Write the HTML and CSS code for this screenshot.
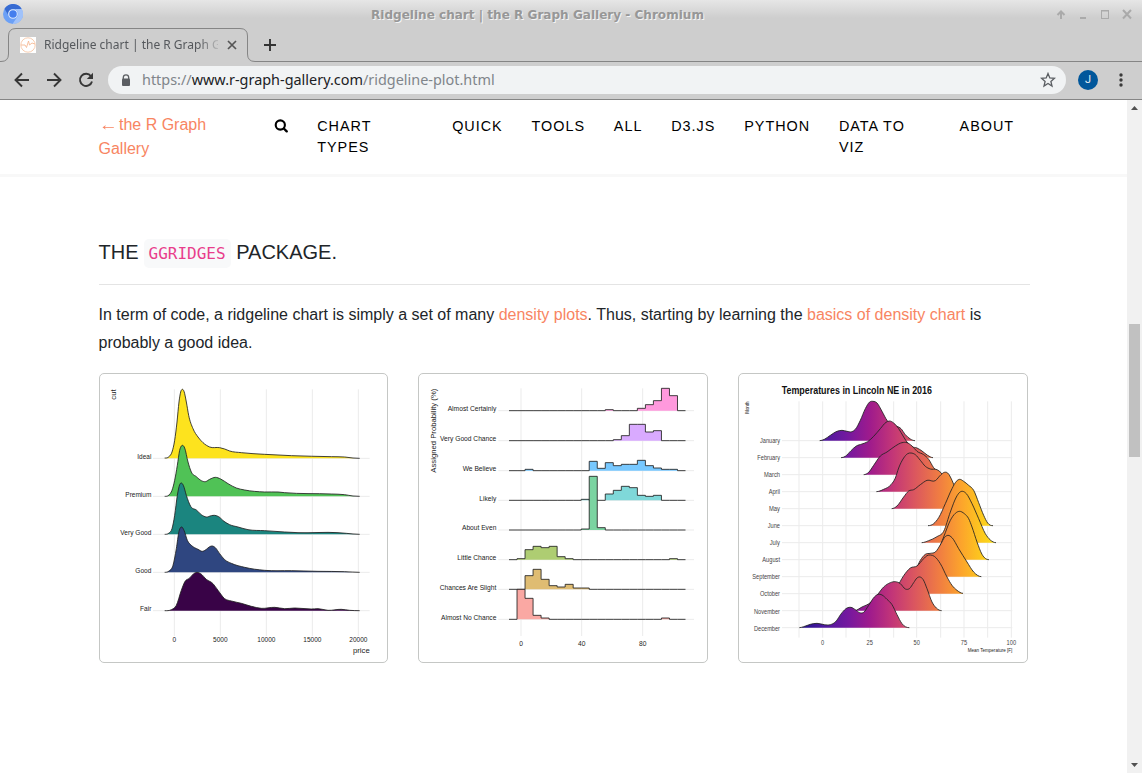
FILE: index.html
```html
<!DOCTYPE html>
<html lang="en">
<head>
<meta charset="utf-8">
<title>Ridgeline chart | the R Graph Gallery</title>
<link rel="stylesheet" href="styles.css">
</head>
<body>
<div class="window">
  <header class="chrome">
    <svg class="tab-outline" width="1142" height="63"><path d="M0 61.5H1Q8.500 61.500 8.500 54V36Q8.500 28.500 16 28.500H240Q247.500 28.500 247.500 36V54Q247.500 61.500 255 61.500H1142" fill="none" stroke="#858585"/></svg>
    <div class="titlebar">
      <svg class="app-icon" width="20" height="20" viewBox="0 0 20 20"><circle cx="10" cy="10" r="10" fill="#6ba0f6"/><path d="M1.500 4.700A10 10 0 0 1 18.700 5H10A5 5 0 0 0 5.500 11.500Z" fill="#376bd2"/><path d="M18.700 5A10 10 0 0 1 9.500 20L14.500 12.500A5 5 0 0 0 10 5Z" fill="#a0c2fa"/><circle cx="10" cy="10" r="4.300" fill="#447eee" stroke="#dce8fc" stroke-width="1.100"/></svg>
      <span class="title">Ridgeline chart | the R Graph Gallery - Chromium</span>
      <svg class="window-buttons" width="78" height="14" viewBox="0 0 78 14" fill="none" stroke="#aaa"><path d="M7 12V5M3.500 8L7 4.500L10.500 8" stroke-width="2"/><path d="M26 11H32" stroke-width="2"/><path d="M47 3.500H55M47.500 3V12M54.500 3V12M47 11.500H55"/><path d="M47 4H55"/><path d="M69 3L77 11.500M77 3L69 11.500" stroke-width="2"/></svg>
    </div>
    <div class="tabs">
      <svg class="favicon" width="16" height="16" viewBox="0 0 16 16"><path d="M0 0H16V16H0Z" fill="#fff"/><circle cx="8" cy="8" r="7.200" fill="none" stroke="#f8cdb0"/><path d="M1 8H5L6.500 10.500L8.500 4L9.500 8L12 6L15 7" fill="none" stroke="#f5b994" stroke-width=".9"/></svg>
      <span class="tab-title">Ridgeline chart | the R Graph Gallery</span>
      <svg class="tab-close" width="10" height="10" viewBox="0 0 10 10"><path d="M1 1L9 9M9 1L1 9" stroke="#555" stroke-width="1.700"/></svg>
      <svg width="12" height="12" viewBox="0 0 12 12"><path d="M6 0V12M0 6H12" stroke="#333" stroke-width="1.900"/></svg>
    </div>
    <div class="toolbar">
      <svg class="arrow" width="16" height="16" viewBox="0 0 16 16"><path d="M15 8H2M8 1.500L1.500 8L8 14.500"/></svg>
      <svg class="arrow" width="16" height="16" viewBox="0 0 16 16"><path d="M1 8H14M8 1.500L14.500 8L8 14.500"/></svg>
      <svg class="reload" width="16" height="16" viewBox="0 0 16 16"><path d="M13 4.200A6.100 6.100 0 1 0 14 9.500" fill="none" stroke="#373737" stroke-width="1.900"/><path d="M15 .8V7H8.800Z" fill="#373737"/></svg>
      <div class="omnibox">
        <svg width="10" height="13" viewBox="0 0 10 13"><path d="M2.300 5V3.500A2.700 2.700 0 0 1 7.700 3.500V5" fill="none" stroke="#5b5e62" stroke-width="1.300"/><rect x="1" y="4.500" width="8" height="7.500" rx="1" fill="#5b5e62"/></svg>
        <span class="url">https://<b>www.r-graph-gallery.com</b>/ridgeline-plot.html</span>
        <svg class="star" width="16" height="16" viewBox="0 0 16 16"><path d="M8 1.500L9.800 6L14.500 6.300L10.900 9.400L12 14L8 11.500L4 14L5.100 9.400L1.500 6.300L6.200 6Z" fill="none" stroke="#5b5e62" stroke-width="1.300"/></svg>
      </div>
      <span class="avatar">J</span>
      <svg class="menu" width="4" height="14" viewBox="0 0 4 14" fill="#3a3a3a"><circle cx="2" cy="2" r="1.700"/><circle cx="2" cy="7" r="1.700"/><circle cx="2" cy="12" r="1.700"/></svg>
    </div>
  </header>
  <div class="viewport">
    <div class="page">
      <nav class="site-nav">
        <a class="brand"><span class="back">←</span> the R Graph Gallery</a>
        <ul class="links">
          <li class="search"><svg width="14" height="14" viewBox="0 0 14 14" fill="none" stroke="#000"><circle cx="6.300" cy="6" r="4.600" stroke-width="2.100"/><path d="M9.800 9.500L12.700 12.300" stroke-width="2.400" stroke-linecap="round"/></svg></li>
          <li class="types">CHART TYPES</li>
          <li>QUICK</li>
          <li>TOOLS</li>
          <li>ALL</li>
          <li>D3.JS</li>
          <li>PYTHON</li>
          <li class="viz">DATA TO VIZ</li>
          <li>ABOUT</li>
        </ul>
      </nav>
      <main class="content">
        <h2>THE <code>GGRIDGES</code> PACKAGE.</h2>
        <hr>
        <p>In term of code, a ridgeline chart is simply a set of many <a>density plots</a>. Thus, starting by learning the <a>basics of density chart</a> is probably a good idea.</p>
        <div class="cards">
          <div class="card"><svg id="diamonds" viewBox="6 6 861 864"></svg></div>
          <div class="card"><svg id="probability" viewBox="6 6 864 864"></svg></div>
          <div class="card"><svg id="lincoln" viewBox="6 6 864 864">
            <defs><linearGradient id="heat" gradientUnits="userSpaceOnUse" x1="185" y1="0" x2="780" y2="0">
              <stop offset="0" stop-color="#1b0d8a"/><stop offset=".12" stop-color="#4b1a9e"/><stop offset=".25" stop-color="#75189f"/><stop offset=".36" stop-color="#9f1b8c"/><stop offset=".47" stop-color="#c23578"/><stop offset=".58" stop-color="#da5560"/><stop offset=".71" stop-color="#f07d42"/><stop offset=".82" stop-color="#fca42c"/><stop offset=".92" stop-color="#fdc81e"/><stop offset="1" stop-color="#f8e21a"/>
            </linearGradient></defs>
          </svg></div>
        </div>
      </main>
    </div>
    <div class="scrollbar">
      <svg width="7" height="4" viewBox="0 0 7 4"><path d="M3.500 0L7 4H0Z" fill="#505050"/></svg>
      <div class="thumb"></div>
      <svg width="7" height="4" viewBox="0 0 7 4"><path d="M3.500 4L7 0H0Z" fill="#505050"/></svg>
    </div>
  </div>
</div>
<script src="charts.js"></script>
</body>
</html>
```
FILE: styles.css
```css
* { box-sizing: border-box; }
body { margin: 0; font-family: "Liberation Sans", Arial, sans-serif; color: #212529; }
svg { display: block; flex: none; }
.window { width: 1142px; height: 773px; display: flex; flex-direction: column; overflow: hidden; background: #fff; }

.chrome { position: relative; height: 100px; flex: none; background: linear-gradient(#e6e6e6, #cecece 18px); border-bottom: 1px solid #858585; }
.tab-outline { position: absolute; left: 0; top: 0; }
.titlebar { height: 28px; display: flex; align-items: flex-start; padding: 4px 10px 0 3px; }
.title { margin: 0 auto 0 348px; font: bold 12.05px/22px "DejaVu Sans", sans-serif; color: #979797; text-shadow: 1px 1px 0 #f4f4f4; white-space: nowrap; }
.window-buttons { margin-top: 3px; }
.tabs { height: 34px; display: flex; align-items: center; padding-left: 20px; }
.favicon { margin-right: 8px; }
.tab-title { width: 174px; overflow: hidden; white-space: nowrap; font: 12px/20px "Noto Sans", sans-serif; color: #55585c; -webkit-mask-image: linear-gradient(90deg, #000 155px, transparent 178px); mask-image: linear-gradient(90deg, #000 155px, transparent 178px); }
.tab-close { margin: 0 27px 0 9px; }
.toolbar { height: 36px; display: flex; align-items: center; padding-left: 14px; }
.arrow { margin-right: 16px; fill: none; stroke: #373737; stroke-width: 1.9; }
.reload { margin-right: 14px; }
.omnibox { width: 958px; height: 28px; border-radius: 14px; background: #f1f3f4; display: flex; align-items: center; padding: 0 10px 0 13px; }
.url { flex: 1; margin-left: 11px; font: 14.43px/26px "Noto Sans", sans-serif; color: #80858a; }
.url b { font-weight: 400; color: #202124; }
.avatar { width: 20px; height: 20px; margin: 0 21px 0 12px; border-radius: 50%; background: #01579b; color: #e6eef5; font: 11px/20px Roboto, sans-serif; text-align: center; }

.viewport { flex: 1; display: flex; min-height: 0; }
.page { width: 1127px; }
.scrollbar { width: 15px; background: #f1f1f1; display: flex; flex-direction: column; align-items: center; padding: 6px 0; }
.thumb { width: 11px; height: 133px; margin: 214px 0 auto; background: #c1c1c1; }

.site-nav { height: 77px; display: flex; align-items: flex-start; padding: 13px 98.5px 0; border-bottom: 3px solid #f8f8f8; }
.brand { width: 161px; padding-right: 40px; font-size: 16px; line-height: 24px; color: #f88562; }
.back { display: inline-block; transform: scaleX(1.18); transform-origin: 0 50%; }
.links { display: flex; margin: 3px 0 0; padding: 0; list-style: none; font-size: 14.4px; line-height: 21px; letter-spacing: 1px; color: #000; }
.links li { padding: 0 14.4px; white-space: nowrap; }
.links .search { width: 43.600px; padding-top: 3px; }
.links .types, .links .viz { white-space: normal; }
.links .types { width: 135px; padding-right: 50px; }
.links .viz { width: 120.600px; }

.content { padding: 60px 97px 0 98.5px; }
h2 { margin: 0; font-size: 20px; font-weight: 400; line-height: 30px; }
code { margin: 0 0 0 -.5px; padding: 5px; border-radius: 5px; background: #f8f9fa; color: #e83e8c; font: 16px "DejaVu Sans Mono", monospace; }
hr { margin: 17px 0 16px; border: 0; border-top: 1px solid #e4e4e4; }
p { margin: 0 0 16px; font-size: 16px; line-height: 28px; }
p a { color: #f88562; }
.cards { display: grid; grid-template-columns: 289px 290px 290px; gap: 30px; padding-left: .5px; }
.card { height: 290px; border: 1px solid #c5c7c5; border-radius: 5px; overflow: hidden; }
.card svg { width: 100%; height: 100%; font-family: "Liberation Sans", Arial, sans-serif; }
.grid { stroke: #ebebeb; stroke-width: 3; }
.edge { fill: none; stroke: #222; stroke-opacity: .85; stroke-width: 3; stroke-linejoin: round; }
```
FILE: charts.js
```js
const NS = 'http://www.w3.org/2000/svg';

function add(svg, tag, attrs, text) {
  const el = document.createElementNS(NS, tag);
  for (const k in attrs) el.setAttribute(k, attrs[k]);
  if (text) el.textContent = text;
  svg.appendChild(el);
}

function label(svg, text, x, y, size, width, opts) {
  const attrs = { x: x, y: y, 'font-size': size, fill: '#222', 'text-anchor': 'end' };
  if (width) { attrs.textLength = width; attrs.lengthAdjust = 'spacingAndGlyphs'; }
  add(svg, 'text', Object.assign(attrs, opts), text);
}

function line(svg, x1, y1, x2, y2) {
  add(svg, 'line', { x1: x1, y1: y1, x2: x2, y2: y2, class: 'grid' });
}

// Cubic path through a flat list x0,y0,x1,y1,... with central-difference tangents
function smooth(flat) {
  const p = [];
  for (let i = 0; i < flat.length; i += 2) p.push([flat[i], flat[i + 1]]);
  const n = p.length, m = [];
  m[0] = 0; m[n - 1] = 0;
  for (let i = 1; i < n - 1; i++) {
    const l = (p[i][1] - p[i - 1][1]) / (p[i][0] - p[i - 1][0]);
    const r = (p[i + 1][1] - p[i][1]) / (p[i + 1][0] - p[i][0]);
    const hl = p[i][0] - p[i - 1][0], hr = p[i + 1][0] - p[i][0];
    m[i] = (l * hr + r * hl) / (hl + hr);
  }
  let d = 'M' + p[0];
  for (let i = 0; i < n - 1; i++) {
    const h = (p[i + 1][0] - p[i][0]) / 3;
    d += 'C' + [p[i][0] + h, p[i][1] + m[i] * h, p[i + 1][0] - h, p[i + 1][1] - m[i + 1] * h, p[i + 1][0], p[i + 1][1]];
  }
  return d;
}

function ridge(svg, pts, base, fill) {
  const d = smooth(pts);
  add(svg, 'path', { d: d + 'V' + base + 'H' + pts[0] + 'Z', fill: fill });
  add(svg, 'path', { d: d, class: 'edge' });
}

// Diamond prices by cut
const a = document.getElementById('diamonds');
const cuts = [
  ['Ideal', 259, '#fde31e', 42, [200,258,213,254,222,240,230,205,237,150,243,90,248,60,253,52,258,58,265,90,272,130,285,170,300,195,315,212,335,225,365,227,380,231,395,237,430,242,500,247,580,251,700,254,740,255,765,258,785,259]],
  ['Premium', 373, '#50c256', 78, [200,373,213,369,222,355,230,325,238,280,245,235,250,222,254,220,260,228,270,270,280,300,295,314,310,326,322,329,335,322,352,316,368,321,390,335,415,348,440,354,500,360,540,360,560,362,700,366,740,368,765,372,785,373]],
  ['Very Good', 487, '#1b857f', 93, [200,487,213,483,222,470,230,430,238,370,245,338,250,333,256,340,265,370,278,403,295,414,310,428,325,435,340,431,350,430,362,434,378,448,395,458,420,465,450,473,500,476,560,480,600,482,720,482,745,484,785,487]],
  ['Good', 601, '#2f4680', 48, [200,601,213,597,225,580,235,530,243,478,251,465,258,475,268,505,280,520,300,532,313,538,325,532,335,524,343,522,352,527,365,545,380,563,400,574,440,586,500,595,580,596,660,598,740,599,785,601]],
  ['Fair', 716, '#390347', 34, [200,716,220,713,235,700,250,655,260,630,275,618,287,605,297,601,308,605,325,622,345,635,360,655,380,680,400,687,430,694,460,703,490,709,530,706,560,710,590,708,640,711,660,710,690,715,730,712,755,715,785,716]]
];
[[229, '0'], [367, '5000'], [505, '10000'], [643, '15000'], [781, '20000']].forEach(([x, t]) => {
  line(a, x, 52, x, 792);
  label(a, t, x, 811, 19.5, 0, { 'text-anchor': 'middle' });
});
cuts.forEach(c => line(a, 165, c[1], 815, c[1]));
cuts.forEach(c => { ridge(a, c[4], c[1], c[2]); label(a, c[0], 160, c[1] + 1, 20, c[3]); });
label(a, 'price', 815, 842, 23, 50);
label(a, 'cut', 0, 0, 22, 31, { transform: 'translate(54 52) rotate(-90)' });

// Perceived probability histograms, 22 bins each
const b = document.getElementById('probability');
const phrases = [
  ['Almost Certainly', 116, '#ff99dd', 146, {12:3,16:7,17:18,18:30,19:67,20:45}],
  ['Very Good Chance', 206, '#d9aaff', 169, {13:3,14:15,15:49,16:49,17:26,18:30}],
  ['We Believe', 296, '#77c8ff', 101, {2:4,10:28,11:7,12:24,13:15,14:19,15:19,16:31,17:15,18:8,19:4,20:4}],
  ['Likely', 385, '#7fd8d9', 51, {9:3,12:19,13:30,14:42,15:38,16:15,17:12,18:15}],
  ['About Even', 474, '#7bd4a1', 103, {9:3,10:161,11:7}],
  ['Little Chance', 563, '#aecd72', 117, {1:3,2:30,3:40,4:36,5:40,6:9,7:3,20:3}],
  ['Chances Are Slight', 652, '#dfbc72', 170, {2:41,3:60,4:30,5:11,6:7,7:15,8:4,9:4}],
  ['Almost No Chance', 742, '#faa8a3', 166, {1:90,2:63,3:12,4:4,19:4}]
];
[[312, '0'], [494, '40'], [677, '80']].forEach(([x, t]) => {
  line(b, x, 49, x, 792);
  label(b, t, x, 821, 20, 0, { 'text-anchor': 'middle' });
});
phrases.forEach(([name, base, fill, width, bins]) => {
  line(b, 244, base, 831, base);
  let d = 'M276 ' + base;
  for (let k = 0; k < 22; k++) d += 'V' + (base - (bins[k] || 0)) + 'H' + (276 + 24.07 * (k + 1));
  d += 'V' + base;
  add(b, 'path', { d: d + 'Z', fill: fill });
  add(b, 'path', { d: d, class: 'edge' });
  label(b, name, 238, base + 1, 20, width);
});
label(b, 'Assigned Probability (%)', 0, 0, 23, 252, { transform: 'translate(56 50) rotate(-90)' });

// Lincoln temperatures by month
const c = document.getElementById('lincoln');
const months = [
  ['January', 60, [248,206,262,202,280,190,300,178,315,175,330,178,345,179,355,172,370,145,385,110,398,90,408,88,420,93,435,118,450,145,465,158,480,163,492,170,505,188,520,201,534,206]],
  ['February', 68, [312,257,325,253,342,236,358,222,375,216,392,209,410,193,430,170,447,151,457,147,470,153,485,170,500,195,512,213,525,224,540,228,555,237,572,250,588,257]],
  ['March', 48, [380,308,395,301,410,280,430,252,450,240,475,222,495,212,510,212,525,222,540,238,560,248,575,262,590,287,605,300,620,308]],
  ['April', 34, [418,359,440,352,462,338,475,318,485,288,500,258,512,245,522,243,535,248,550,265,565,283,580,291,600,293,612,302,625,320,640,345,655,359]],
  ['May', 33, [464,410,480,402,500,375,515,357,530,353,550,338,570,325,595,326,612,308,622,301,632,303,645,325,655,350,670,390,690,410]],
  ['June', 37, [573,461,590,455,605,437,625,395,645,350,658,328,668,322,680,328,695,340,710,355,725,392,740,430,752,453,768,461]],
  ['July', 31, [554,512,575,506,600,494,620,478,640,420,658,375,668,361,677,358,688,365,705,395,725,440,745,485,760,504,777,512]],
  ['August', 53, [575,563,590,555,605,532,620,495,640,445,655,424,667,418,682,425,695,440,705,465,720,510,735,547,756,563]],
  ['September', 83, [520,614,535,595,550,565,565,547,580,544,595,540,612,515,622,497,633,490,645,497,665,530,690,570,710,600,733,614]],
  ['October', 60, [465,665,480,645,500,611,520,588,540,582,560,560,570,551,580,549,592,553,610,575,630,615,645,640,660,655,678,664]],
  ['November', 78, [352,716,375,705,400,692,420,670,440,645,460,632,475,629,490,635,505,651,517,650,530,632,540,618,549,615,558,622,570,650,585,690,598,708,614,716]],
  ['December', 78, [187,767,200,764,220,757,240,754,262,758,280,758,295,750,315,722,330,708,342,706,355,713,368,722,380,721,395,700,412,675,423,667,435,669,450,682,465,698,480,728,495,755,517,767]]
];
[186, 257, 327, 398, 470, 539, 611, 681, 752, 823].forEach(x => line(c, x, 88, x, 797));
[[257, '0'], [398, '25'], [539, '50'], [681, '75'], [823, '100']].forEach(([x, t]) =>
  label(c, t, x, 818, 19, t.length * 9.5, { 'text-anchor': 'middle', fill: '#444' }));
months.forEach((m, i) => line(c, 135, 206 + 51 * i, 826, 206 + 51 * i));
months.forEach((m, i) => {
  const base = 206 + 51.05 * i;
  ridge(c, m[2], base, 'url(#heat)');
  label(c, m[0], 129, base + 8, 20, m[1], { fill: '#444' });
});
label(c, 'Temperatures in Lincoln NE in 2016', 585, 66, 31, 451, { 'font-weight': 'bold', fill: '#111' });
label(c, 'Mean Temperature [F]', 826, 840, 17, 134);
label(c, 'Month', 0, 0, 16, 36, { transform: 'translate(35 89) rotate(-90)' });
```
